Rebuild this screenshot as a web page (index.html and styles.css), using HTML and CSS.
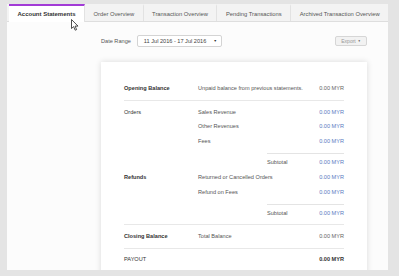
FILE: index.html
```html
<!DOCTYPE html>
<html lang="en">
  <head>
    <meta charset="UTF-8" />
    <title>Account Statements</title>
    <link rel="stylesheet" href="styles.css">
  </head>

  <body>
    <div class="panel">
      <!-- Tab strip -->
      <div class="tabs">
        <div class="tab active">Account Statements</div>
        <div class="tab">Order Overview</div>
        <div class="tab">Transaction Overview</div>
        <div class="tab">Pending Transactions</div>
        <div class="tab">Archived Transaction Overview</div>
      </div>

      <div class="content">
        <!-- Date filter and export -->
        <div class="toolbar">
          <div class="range">
            <span class="range-label">Date Range</span>
            <div class="select">
              <span>11 Jul 2016 - 17 Jul 2016</span>
              <span class="caret">&#9660;</span>
            </div>
          </div>
          <div class="export">Export <span class="export-caret">&#9660;</span></div>
        </div>

        <!-- Statement card -->
        <div class="card">
          <div class="section">
            <div class="label bold">Opening Balance</div>
            <div class="body">
              <div class="line"><span>Unpaid balance from previous statements.</span><span class="amount plain">0.00 MYR</span></div>
            </div>
          </div>

          <div class="section open">
            <div class="label">Orders</div>
            <div class="body">
              <div class="line"><span>Sales Revenue</span><span class="amount">0.00 MYR</span></div>
              <div class="line"><span>Other Revenues</span><span class="amount">0.00 MYR</span></div>
              <div class="line"><span>Fees</span><span class="amount">0.00 MYR</span></div>
              <div class="line subtotal"><span>Subtotal</span><span class="amount">0.00 MYR</span></div>
            </div>
          </div>

          <div class="section refunds">
            <div class="label bold">Refunds</div>
            <div class="body">
              <div class="line"><span>Returned or Cancelled Orders</span><span class="amount">0.00 MYR</span></div>
              <div class="line"><span>Refund on Fees</span><span class="amount">0.00 MYR</span></div>
              <div class="line subtotal"><span>Subtotal</span><span class="amount">0.00 MYR</span></div>
            </div>
          </div>

          <div class="section">
            <div class="label bold">Closing Balance</div>
            <div class="body">
              <div class="line"><span>Total Balance</span><span class="amount plain">0.00 MYR</span></div>
            </div>
          </div>

          <div class="section last">
            <div class="label">PAYOUT</div>
            <div class="body">
              <div class="line"><span></span><span class="amount total">0.00 MYR</span></div>
            </div>
          </div>
        </div>
      </div>

      <!-- Mouse pointer over the active tab -->
      <svg class="cursor" width="8" height="12" viewBox="0 0 8 12">
        <path d="M0.5 0.5 L0.5 9.5 L2.6 7.6 L4.2 11.2 L5.6 10.6 L4.1 7.1 L7 7.1 Z" fill="#fff" stroke="#222" stroke-width="0.8" stroke-linejoin="round" />
      </svg>
    </div>
  </body>
</html>
```

FILE: styles.css
```css
body {
  margin: 0;
  padding: 4px 11px 0 7px;
  background-color: #e4e4e4;
  font-family: "Liberation Sans", Arial, sans-serif;
  color: #444;
  height: 276px;
  box-sizing: border-box;
  overflow: hidden;
}

.panel {
  position: relative;
  height: 266px;
  background-color: #fcfcfc;
  overflow: hidden;
}

.tabs {
  display: flex;
  padding-left: 2px;
  height: 17px;
  background-color: #f3f3f3;
  border-bottom: 1px solid #dedede;
}

.tab {
  display: flex;
  align-items: center;
  padding: 0 8.5px;
  font-size: 5.8px;
  color: #555;
  border-top: 2px solid transparent;
  border-right: 1px solid #e2e2e2;
  white-space: nowrap;
}

.tab.active {
  background-color: #fff;
  border-top-color: #a23bd6;
  font-weight: bold;
  font-size: 6px;
  color: #333;
  margin-bottom: -1px;
}

.content {
  margin: 0 21px 0 94px;
}

.toolbar {
  display: flex;
  justify-content: space-between;
  align-items: center;
  margin-top: 13px;
  height: 12px;
}

.range {
  display: flex;
  align-items: center;
  font-size: 5.6px;
}

.range-label {
  color: #555;
  margin-right: 6px;
}

.select {
  display: flex;
  justify-content: space-between;
  align-items: center;
  width: 85px;
  height: 12px;
  box-sizing: border-box;
  padding: 0 4px 0 6px;
  border: 1px solid #d4d4d4;
  border-radius: 2px;
  background-color: #fff;
  color: #444;
}

.caret {
  font-size: 3.5px;
  color: #333;
}

.export {
  width: 32px;
  height: 10px;
  box-sizing: border-box;
  border: 1px solid #d6d6d6;
  border-radius: 2px;
  background-color: #f2f2f2;
  color: #999;
  font-size: 5px;
  display: flex;
  align-items: center;
  justify-content: center;
}

.export-caret {
  font-size: 3px;
  color: #555;
  margin-left: 2px;
}

.card {
  margin-top: 15px;
  background-color: #fff;
  box-shadow: 0 0 6px rgba(0, 0, 0, 0.14);
  padding: 19px 23px 10px;
  font-size: 5.6px;
  color: #555;
  min-height: 260px;
}

.section {
  display: flex;
  padding: 4px 0 4px;
  border-bottom: 1px solid #e8e8e8;
  line-height: 14px;
}

.section:first-child {
  padding-top: 0;
}

.section.open {
  border-bottom: none;
  padding-bottom: 1px;
}

.section.refunds {
  padding-top: 1px;
  padding-bottom: 5px;
}

.section.last {
  border-bottom: none;
  padding-top: 3px;
}

.label {
  width: 74px;
  flex-shrink: 0;
  color: #333;
}

.bold {
  font-weight: bold;
}

.body {
  flex: 1;
}

.line {
  display: flex;
  justify-content: space-between;
  height: 14.5px;
}

.line.subtotal {
  margin-top: 4.5px;
  margin-left: 69px;
  border-top: 1px solid #e4e4e4;
  line-height: 16px;
}

.amount {
  color: #5a7bbf;
}

.amount.plain {
  color: #666;
}

.amount.total {
  color: #333;
  font-weight: bold;
}

.cursor {
  position: absolute;
  left: 64px;
  top: 15px;
}
```
